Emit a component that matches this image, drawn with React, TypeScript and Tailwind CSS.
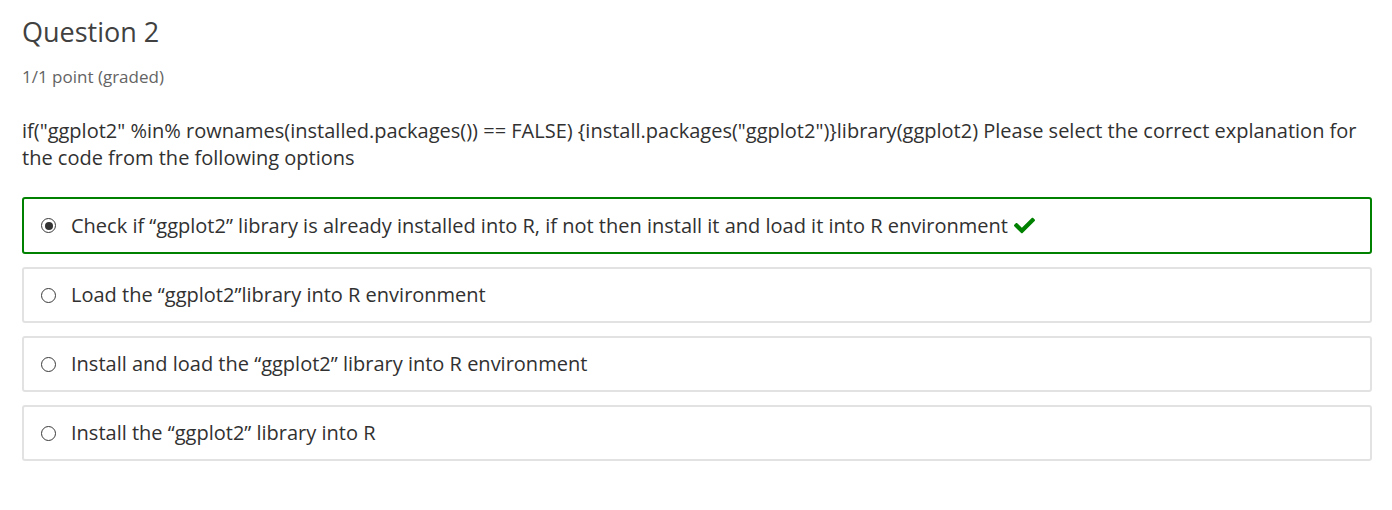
import React from 'react';

const options = [
  'Check if \u201cggplot2\u201d library is already installed into R, if not then install it and load it into R environment',
  'Load the \u201cggplot2\u201dlibrary into R environment',
  'Install and load the \u201cggplot2\u201d library into R environment',
  'Install the \u201cggplot2\u201d library into R',
];

function CheckIcon() {
  return (
    <svg viewBox="0 0 512 512" className="w-[21px] h-[21px] ml-[6px] inline-block align-[-3px]">
      <path
        fill="#008100"
        d="M173.9 439.4L7.5 273c-10-10-10-26.2 0-36.2l36.2-36.2c10-10 26.2-10 36.2 0L192 312.7 432.1 72.6c10-10 26.2-10 36.2 0l36.2 36.2c10 10 10 26.2 0 36.2L210.1 439.4c-10 10-26.2 10-36.2 0z"
      />
    </svg>
  );
}

export default function App() {
  const selected = 0;
  return (
    <div className="bg-white w-[1392px] h-[510px] px-[22px] pt-[14px] font-['Open_Sans',sans-serif]">
      <h2 className="text-[27px] leading-[36px] text-[#414141] font-normal">Question 2</h2>
      <div className="mt-[15px] text-[17px] leading-[24px] text-[#646464]">1/1 point (graded)</div>
      <p className="mt-[28px] text-[20px] leading-[27px] text-[#313131] pr-[10px]">
        if("ggplot2" %in% rownames(installed.packages()) == FALSE) {'{'}install.packages("ggplot2"){'}'}library(ggplot2) Please select the correct explanation for the code from the following options
      </p>
      <div className="mt-[26px] w-[1350px] flex flex-col gap-[13px]">
        {options.map((opt, i) => (
          <label
            key={i}
            className={
              i === selected
                ? 'flex items-center h-[57px] pl-[17px] rounded-[3px] border-2 border-[#008100] bg-white'
                : 'flex items-center h-[56px] pl-[17px] rounded-[3px] border-2 border-[#e2e2e2] bg-white'
            }
          >
            <span className="w-[15px] h-[15px] rounded-full border-[1.5px] border-[#3a3a3a] flex items-center justify-center shrink-0">
              {i === selected && <span className="w-[8px] h-[8px] rounded-full bg-[#333]" />}
            </span>
            <span className="ml-[15px] text-[20px] text-[#313131]">
              {opt}
              {i === selected && <CheckIcon />}
            </span>
          </label>
        ))}
      </div>
    </div>
  );
}
